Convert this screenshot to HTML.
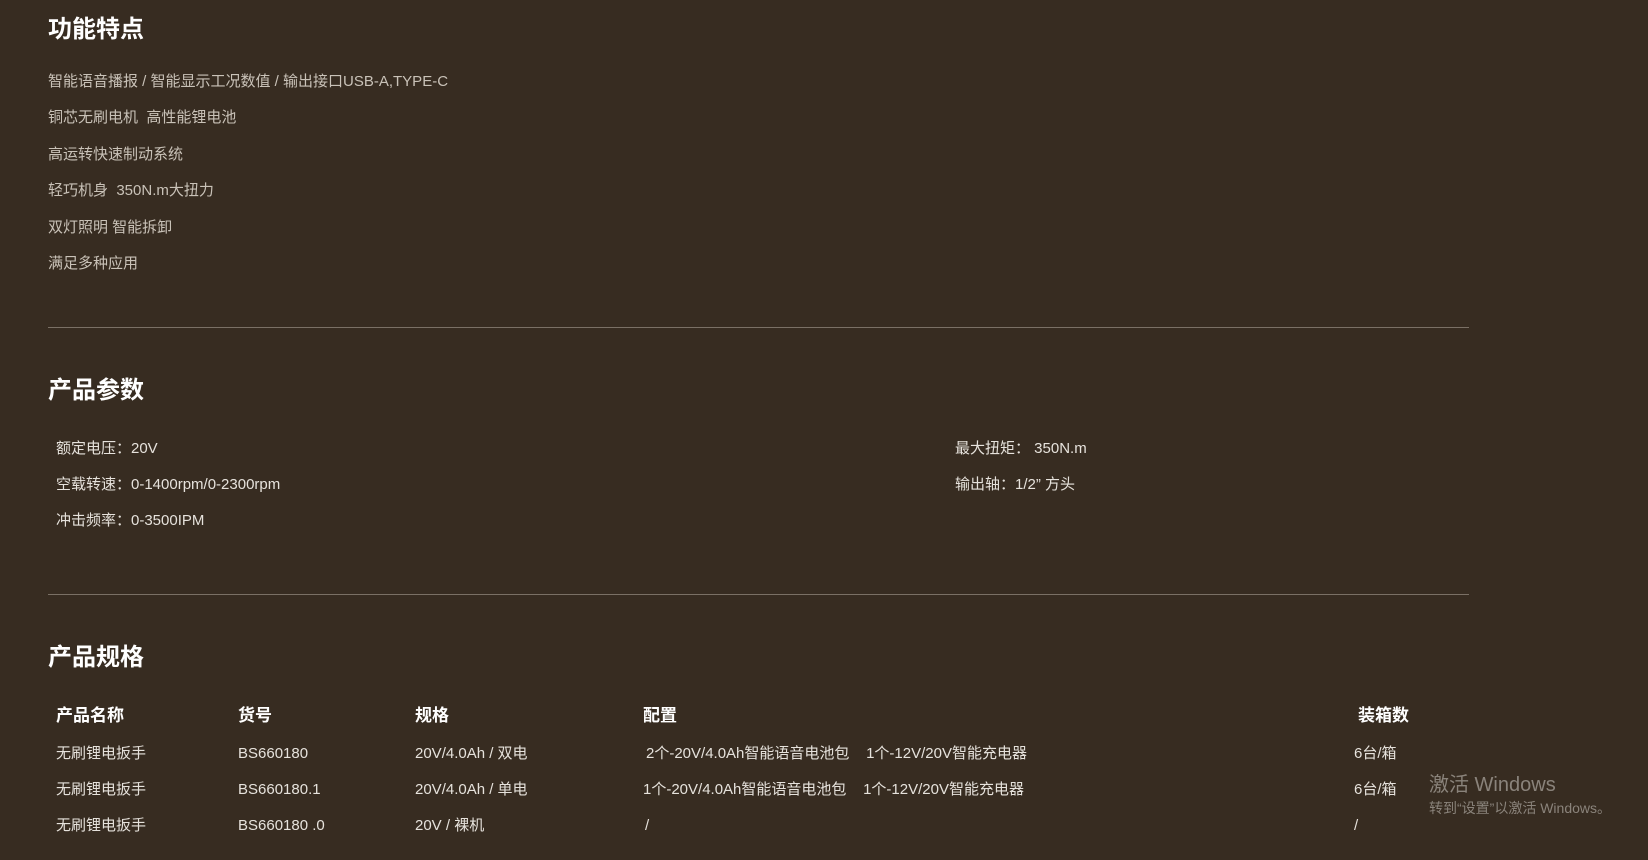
<!DOCTYPE html>
<html><head><meta charset="utf-8"><style>
body{margin:0;width:1648px;height:860px;background:#372c21;overflow:hidden;font-family:"Liberation Sans","Noto Sans CJK SC",sans-serif;position:relative}
.a{position:absolute;white-space:nowrap;line-height:1}
h2{position:absolute;margin:0;font-size:24px;color:#fff;font-weight:bold;line-height:1;left:48px}
.f{font-size:15px;color:#c9c2b8;left:48px}
.p{font-size:15px;color:#e6e2dc}
.t{font-size:15px;color:#e6e2dc}
.th{font-size:17px;font-weight:bold;color:#fff}
.hr{position:absolute;left:48px;width:1421px;height:1px;background:#7a7065}
</style></head><body>
<h2 style="top:18px">功能特点</h2>
<div class="a f" style="top:74px">智能语音播报 / 智能显示工况数值 / 输出接口USB-A,TYPE-C</div>
<div class="a f" style="top:110px">铜芯无刷电机&nbsp; 高性能锂电池</div>
<div class="a f" style="top:147px">高运转快速制动系统</div>
<div class="a f" style="top:183px">轻巧机身&nbsp; 350N.m大扭力</div>
<div class="a f" style="top:220px">双灯照明 智能拆卸</div>
<div class="a f" style="top:256px">满足多种应用</div>
<div class="hr" style="top:327px"></div>
<h2 style="top:379px">产品参数</h2>
<div class="a p" style="left:56px;top:441px">额定电压：20V</div>
<div class="a p" style="left:56px;top:477px">空载转速：0-1400rpm/0-2300rpm</div>
<div class="a p" style="left:56px;top:513px">冲击频率：0-3500IPM</div>
<div class="a p" style="left:955px;top:441px">最大扭矩：&nbsp;350N.m</div>
<div class="a p" style="left:955px;top:477px">输出轴：1/2”&nbsp;方头</div>
<div class="hr" style="top:594px"></div>
<h2 style="top:646px">产品规格</h2>
<div class="a th" style="left:56px;top:707px">产品名称</div>
<div class="a th" style="left:238px;top:707px">货号</div>
<div class="a th" style="left:415px;top:707px">规格</div>
<div class="a th" style="left:643px;top:707px">配置</div>
<div class="a th" style="left:1358px;top:707px">装箱数</div>
<div class="a t" style="left:56px;top:746px">无刷锂电扳手</div>
<div class="a t" style="left:238px;top:746px">BS660180</div>
<div class="a t" style="left:415px;top:746px">20V/4.0Ah / 双电</div>
<div class="a t" style="left:646px;top:746px">2个-20V/4.0Ah智能语音电池包&nbsp;&nbsp;&nbsp; 1个-12V/20V智能充电器</div>
<div class="a t" style="left:1354px;top:746px">6台/箱</div>
<div class="a t" style="left:56px;top:782px">无刷锂电扳手</div>
<div class="a t" style="left:238px;top:782px">BS660180.1</div>
<div class="a t" style="left:415px;top:782px">20V/4.0Ah / 单电</div>
<div class="a t" style="left:643px;top:782px">1个-20V/4.0Ah智能语音电池包&nbsp;&nbsp;&nbsp; 1个-12V/20V智能充电器</div>
<div class="a t" style="left:1354px;top:782px">6台/箱</div>
<div class="a t" style="left:56px;top:818px">无刷锂电扳手</div>
<div class="a t" style="left:238px;top:818px">BS660180 .0</div>
<div class="a t" style="left:415px;top:818px">20V / 裸机</div>
<div class="a t" style="left:645px;top:818px">/</div>
<div class="a t" style="left:1354px;top:818px">/</div>
<div class="a" style="left:1429px;top:775px;font-size:20px;color:#8a837b">激活 Windows</div>
<div class="a" style="left:1429px;top:801px;font-size:14px;color:#8a837b">转到“设置”以激活 Windows。</div>
</body></html>
